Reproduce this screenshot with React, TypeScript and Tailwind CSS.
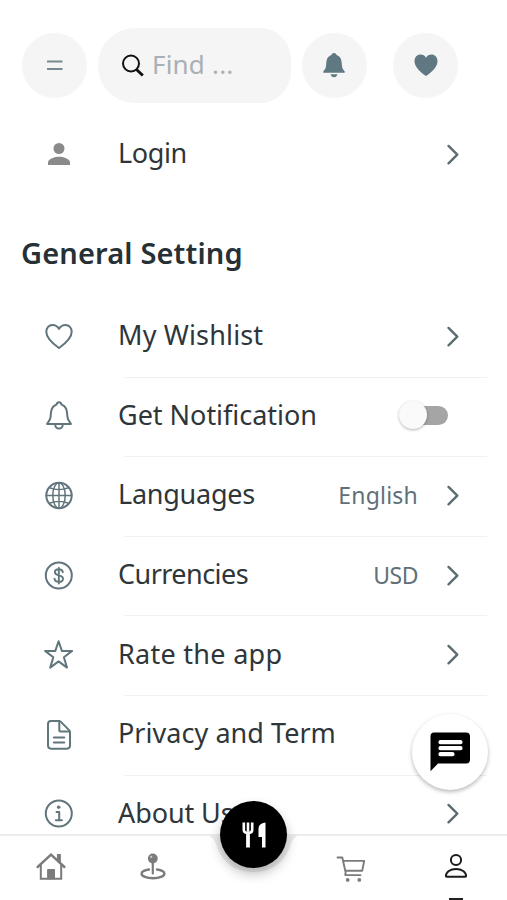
import { useState, type ReactNode } from 'react';

const stroke = {
  fill: 'none',
  stroke: 'currentColor',
  strokeWidth: 2,
  strokeLinecap: 'round',
  strokeLinejoin: 'round',
} as const;

function OutlineIcon({ children }: { children: ReactNode }) {
  return (
    <svg width="32" height="32" viewBox="0 0 32 32" className="text-[#61757c]" {...stroke}>
      {children}
    </svg>
  );
}

const icons = {
  heart: (
    <OutlineIcon>
      <path d="M16 28C13.500 26.200 3.300 19.300 3.300 11.800 3.300 7.700 6 4.900 9.400 4.900c2.900 0 5.300 1.500 6.600 4 1.300-2.500 3.700-4 6.600-4 3.400 0 6.100 2.800 6.100 6.900C28.700 19.300 18.500 26.200 16 28Z" />
    </OutlineIcon>
  ),
  bell: (
    <OutlineIcon>
      <path d="M4.100 25c0-1.100 3-3 3.400-6.700.5-4.900.3-11 6-12.700.3-1.500 1.200-2.400 2.500-2.400s2.200.9 2.500 2.400c5.700 1.700 5.500 7.800 6 12.700.4 3.700 3.400 5.600 3.400 6.700Z" />
      <path d="M12.200 25.500c.2 2.500 1.700 4.100 3.800 4.100s3.600-1.600 3.800-4.100" />
    </OutlineIcon>
  ),
  globe: (
    <OutlineIcon>
      <circle cx="16" cy="16.500" r="12.700" />
      <g strokeWidth="1.500">
        <ellipse cx="16" cy="16.500" rx="6.200" ry="12.700" />
        <path d="M16 3.800v25.400M3.300 16.500h25.400M6.500 8.800c5.500 2.200 13.500 2.200 19 0M6.500 24.200c5.500-2.200 13.500-2.200 19 0" />
      </g>
    </OutlineIcon>
  ),
  dollar: (
    <OutlineIcon>
      <circle cx="15.800" cy="16.500" r="13" />
      <path d="M19.800 13.200c-.3-1.800-1.700-2.900-4-2.900s-3.900 1.200-3.900 3c0 1.900 1.500 2.500 3.900 3.100 2.600.6 4.200 1.400 4.200 3.300s-1.600 3.200-4.200 3.200c-2.500 0-4.100-1.200-4.300-3.200M15.800 9v15.500" strokeWidth="1.900" />
    </OutlineIcon>
  ),
  star: (
    <OutlineIcon>
      <path d="M15.600 3.200l3.300 9.700h10.200l-8.200 6.300 3.100 10.400-8.400-6.200-8.400 6.200 3.100-10.400-8.200-6.300h10.200Z" />
    </OutlineIcon>
  ),
  document: (
    <OutlineIcon>
      <path d="M8 2.900h7.600c1 0 1.600.3 2.300 1l8.200 8.200c.7.700.9 1.200.9 2.300v13.200c0 2.100-1 3.100-3 3.100H8c-2 0-3-1-3-3.100V6c0-2.100 1-3.100 3-3.100Z" />
      <path d="M16.300 3.200v9.200c0 .7.400 1.100 1.100 1.100h9M10.900 19.600h10.400M10.900 24.400h10.400" />
    </OutlineIcon>
  ),
  info: (
    <OutlineIcon>
      <circle cx="15.800" cy="16.500" r="13" />
      <circle cx="15.600" cy="10.200" r="1.300" fill="currentColor" strokeWidth="1" />
      <path d="M13.500 15h2.700v8M12.900 23.200h6" />
    </OutlineIcon>
  ),
};

function Chevron() {
  return (
    <svg width="16" height="24" viewBox="0 0 16 24" className="text-[#5d6c71]" {...stroke} strokeWidth={2.4}>
      <path d="M3.500 3.900 12.300 12.600 3.500 21.300" />
    </svg>
  );
}

interface Item {
  icon: ReactNode;
  label: string;
  tracking: string;
  value?: string;
  valueClass?: string;
  toggle?: boolean;
}

const items: Item[] = [
  { icon: icons.heart, label: 'My Wishlist', tracking: 'tracking-[0.15px]' },
  { icon: icons.bell, label: 'Get Notification', tracking: 'tracking-[-0.02px]', toggle: true },
  { icon: icons.globe, label: 'Languages', tracking: 'tracking-[-0.25px]', value: 'English', valueClass: 'tracking-[0.2px]' },
  { icon: icons.dollar, label: 'Currencies', tracking: 'tracking-[-0.55px]', value: 'USD', valueClass: 'tracking-[-0.5px]' },
  { icon: icons.star, label: 'Rate the app', tracking: 'tracking-[0.28px]' },
  { icon: icons.document, label: 'Privacy and Term', tracking: 'tracking-[0.04px]' },
  { icon: icons.info, label: 'About Us', tracking: 'tracking-[-0.1px]' },
];

function SettingRow({ item, children }: { item: Item; children: ReactNode }) {
  return (
    <div className="flex h-[79.6px] items-center pb-1 pl-[43px] pr-[46px]">
      {item.icon}
      <span className={`ml-[43px] flex-1 whitespace-nowrap pb-px text-[27px] leading-8 text-[#2f363a] ${item.tracking}`}>
        {item.label}
      </span>
      {children}
    </div>
  );
}

function Header() {
  return (
    <header className="flex h-[75px] items-center pl-[22px]">
      <button className="flex size-[65px] items-center justify-center rounded-full bg-[#f5f5f5] text-[#78898f]">
        <svg width="18" height="14" viewBox="0 0 18 14" {...stroke} strokeWidth={2} strokeLinecap="butt">
          <path d="M1 2.500h15.500M1 10h15.500" />
        </svg>
      </button>
      <div className="ml-[11px] flex h-[75px] w-[193px] items-center rounded-l-[37px] rounded-r-[31px] bg-[#f5f5f5] pl-[23px]">
        <svg width="24" height="24" viewBox="0 0 24 24" {...stroke} className="text-[#111]">
          <circle cx="10" cy="9.500" r="8" strokeWidth="2" />
          <path d="M15.500 15.500l6.300 6" strokeWidth="3" strokeLinecap="butt" />
        </svg>
        <span className="ml-[7px] pb-[3px] text-[26px] leading-8 tracking-[0.2px] text-[#a9b0b4]">Find ...</span>
      </div>
      <button className="ml-[11px] flex size-[65px] items-center justify-center rounded-full bg-[#f5f5f5] pb-px pr-0.5">
        <svg width="24" height="26" viewBox="0 0 24 26" fill="#5f7882">
          <path d="M12 1c1.300 0 2.300.8 2.600 2 4.200 1.400 5 5.200 5.200 9 .2 4 1 5.300 2.700 7.200.7.800.4 1.500-.6 1.500H2.100c-1 0-1.300-.7-.6-1.500C3.200 17.300 4 16 4.200 12c.2-3.800 1-7.600 5.200-9C9.700 1.800 10.700 1 12 1Z" />
          <path d="M8.600 22.200h6.800c-.4 1.900-1.600 3-3.400 3s-3-1.100-3.400-3Z" />
        </svg>
      </button>
      <button className="ml-[26px] flex size-[65px] items-center justify-center rounded-full bg-[#f5f5f5] pb-0.5">
        <svg width="26" height="24" viewBox="0 0 26 24" fill="#5f7882">
          <path d="M13 23C9.500 20.500 1.500 15 1.500 8.200 1.500 4.200 4.200 1.600 7.600 1.600c2.300 0 4.200 1.200 5.400 3.200 1.200-2 3.100-3.200 5.400-3.200 3.400 0 6.100 2.600 6.100 6.600C24.500 15 16.500 20.500 13 23Z" />
        </svg>
      </button>
    </header>
  );
}

function BottomNav() {
  return (
    <nav className="absolute inset-x-0 bottom-0 h-[66px] border-t-2 border-[#ececec] bg-white">
      <div className="flex h-full items-start text-[#7b7b7b]">
        <button className="flex w-[102px] justify-center pt-4">
          <svg width="30" height="30" viewBox="0 0 30 30" {...stroke} strokeLinejoin="miter">
            <path d="M1.600 15 15 2.600 28.400 15" strokeWidth="2.400" />
            <path d="M4.800 13v13.800h20.400V13" strokeWidth="2" />
            <path d="M21.600 7.500V2.700h2.600v7.200Z" fill="currentColor" strokeWidth="1.300" />
            <path d="M12 17.500h6.500v9.300H12Z" fill="currentColor" strokeWidth="1" />
          </svg>
        </button>
        <button className="flex w-[101px] justify-center pt-4">
          <svg width="28" height="30" viewBox="0 0 28 30" {...stroke}>
            <circle cx="13.800" cy="6.500" r="4.900" fill="currentColor" stroke="none" />
            <circle cx="12.200" cy="4.900" r="1.100" fill="#ccc" stroke="none" />
            <path d="M13.800 11v10.500" strokeWidth="2.200" />
            <path d="M10 17.500c-4.300.6-7.400 2.200-7.400 4.200 0 2.500 5.100 4.500 11.400 4.500s11.400-2 11.400-4.500c0-2-3.100-3.600-7.400-4.200" strokeWidth="2.400" />
          </svg>
        </button>
        <button className="ml-[96px] flex w-[104px] justify-center pt-[19px]">
          <svg width="30" height="28" viewBox="0 0 30 28" {...stroke} strokeWidth={1.900}>
            <path d="M1.500 2.500h4.800l3.200 14.300c.4 1.400.2 1.700-.2 2.300-.4.700 0 1 .8 1h14.500M7 5.900h21.200l-2 9.900H9.500" />
            <circle cx="11.700" cy="24.900" r="1.900" fill="currentColor" stroke="none" />
            <circle cx="23.300" cy="24.900" r="1.900" fill="currentColor" stroke="none" />
          </svg>
        </button>
        <button className="flex flex-1 flex-col items-center pl-0.5 pt-[17px] text-[#1b1b1b]">
          <svg width="26" height="28" viewBox="0 0 26 28" {...stroke} strokeWidth={2}>
            <circle cx="13" cy="7" r="5.100" />
            <path d="M2.900 23.100c0-4 4.300-7.200 10.100-7.200s10.100 3.200 10.100 7.200c0 .4-.3.700-.8.700H3.700c-.5 0-.8-.3-.8-.7Z" />
          </svg>
          <span className="mt-[17px] h-[3px] w-3.5 bg-[#222]" />
        </button>
      </div>
    </nav>
  );
}

export default function App() {
  const [notify, setNotify] = useState(false);

  return (
    <div className="relative h-[900px] w-[507px] overflow-hidden bg-white pt-7 font-['Noto_Sans',sans-serif]">
      <Header />

      <div className="mt-[13px] flex h-[75px] items-center pl-[43px] pr-[46px]">
        <svg width="32" height="32" viewBox="0 0 32 32" fill="#8a8a8a">
          <circle cx="16" cy="10.500" r="5.500" />
          <path d="M5 27v-2.600c0-3.900 7.300-5.700 11-5.700s11 1.800 11 5.700V27Z" />
        </svg>
        <span className="ml-[43px] flex-1 pb-0.5 text-[27px] leading-8 tracking-[-0.4px] text-[#2f363a]">Login</span>
        <Chevron />
      </div>

      <h2 className="mt-[44px] pl-[21px] text-[29px] font-semibold leading-9 tracking-[0.15px] text-[#263035]">General Setting</h2>

      <section className="mt-[27px]">
        {items.map((item, i) => (
          <div key={item.label} className="relative">
            <SettingRow item={item}>
              {item.value && (
                <span className={`mr-[27px] text-[23px] leading-8 text-[#607078] ${item.valueClass}`}>{item.value}</span>
              )}
              {item.toggle ? (
                <button
                  onClick={() => setNotify(!notify)}
                  className="mr-[13px] flex h-[19px] w-[46px] items-center rounded-full bg-[#a5a5a5]"
                >
                  <span className={`size-7 rounded-full bg-[#fafafa] shadow-[0_1px_3px_rgba(0,0,0,0.3)] ${notify ? 'translate-x-5' : '-translate-x-[3px]'}`} />
                </button>
              ) : (
                <Chevron />
              )}
            </SettingRow>
            {i < items.length - 1 && <div className="absolute bottom-0 left-[124px] right-5 h-px bg-[#f1f1f1]" />}
          </div>
        ))}
      </section>

      <button className="absolute left-[412px] top-[714px] flex size-[76px] items-center justify-center rounded-full bg-white shadow-[0_2px_4px_rgba(0,0,0,0.28)]">
        <svg width="40" height="40" viewBox="0 0 40 40">
          <path d="M4 .5h32q4 0 4 4v23q0 4-4 4H8l-7.500 7.700V4.500q0-4 3.500-4Z" />
          <path d="M10.500 10.200h20M10.500 16.200h20M10.500 22.200h12" stroke="#fff" strokeWidth="4.200" strokeLinecap="round" />
        </svg>
      </button>

      <BottomNav />

      {/* notch in the bar behind the round button */}
      <svg className="absolute left-[203px] top-[834px]" width="101" height="42" viewBox="0 0 101 42">
        <path d="M0 0h101c-7 1-11 4-13 10C82 29 68 38 50.500 38S19 29 13 10C11 4 7 1 0 0Z" fill="#ececec" />
      </svg>

      <button className="absolute left-[220px] top-[801px] flex size-[67px] items-center justify-center rounded-full bg-black shadow-[0_6px_12px_rgba(0,0,0,0.25)]">
        <svg width="26" height="28" viewBox="0 0 26 28" fill="none" stroke="#fff">
          <path d="M2.800 1.500v7.500q0 3 4.200 3t4.200-3V1.500M7 1.500v9" strokeWidth="2.600" />
          <path d="M7 11v15.500" strokeWidth="3.800" />
          <path d="M24.500 1.500v25H21V16h-3.500V7.500q0-5 7-6Z" fill="#fff" stroke="none" />
        </svg>
      </button>
    </div>
  );
}
